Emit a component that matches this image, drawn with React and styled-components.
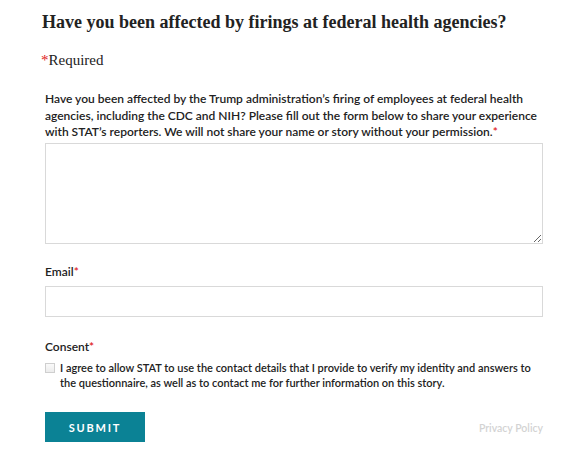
import React from "react";
import styled, { createGlobalStyle } from "styled-components";

const Global = createGlobalStyle`
  html, body { margin: 0; padding: 0; background: #fff; }
  body { font-family: "Lato", "Liberation Sans", sans-serif; color: #222; }
  * { box-sizing: border-box; }
`;

const Page = styled.div`
  width: 586px;
  padding: 10px 43px 0 45px;
`;

const Title = styled.h1`
  margin: 0 0 0 -3px;
  font-family: "Liberation Serif", serif;
  font-weight: 700;
  font-size: 18px;
  line-height: 24px;
  color: #222;
  white-space: nowrap;
`;

const Required = styled.div`
  margin: 17px 0 0 -4px;
  font-family: "Liberation Serif", serif;
  font-size: 15px;
  line-height: 18px;
  color: #222;
`;

const Star = styled.span`
  color: #e02020;
`;

const Form = styled.form`
  display: flex;
  flex-direction: column;
  margin-top: 22px;
`;

const Field = styled.div`
  display: flex;
  flex-direction: column;
  margin-bottom: ${(p) => p.$gap || 0}px;
`;

const Label = styled.label`
  font-size: 12px;
  font-weight: 600;
  line-height: 16.5px;
  color: #222;
  margin-bottom: ${(p) => p.$mb || 4}px;
`;

const TextArea = styled.textarea`
  display: block;
  width: 498px;
  height: 101px;
  border: 1px solid #d9d9d9;
  border-radius: 0;
  resize: vertical;
  font: inherit;
  padding: 6px;
  margin: 0;
  outline: none;
`;

const Input = styled.input`
  display: block;
  width: 498px;
  height: 31px;
  border: 1px solid #d9d9d9;
  border-radius: 0;
  font: inherit;
  padding: 0 6px;
  margin: 0;
  outline: none;
`;

const CheckRow = styled.label`
  display: flex;
  align-items: flex-start;
  gap: 5px;
`;

const Box = styled.span`
  flex: none;
  width: 10px;
  height: 10px;
  margin-top: 3.5px;
  border: 1px solid #cfcfcf;
  background: linear-gradient(#fafafa, #ececec);
`;

const CheckText = styled.span`
  font-size: 11px;
  font-weight: 600;
  line-height: 15px;
  color: #222;
`;

const Footer = styled.div`
  display: flex;
  justify-content: space-between;
  align-items: center;
  margin-top: 22.5px;
`;

const Submit = styled.button`
  width: 100px;
  height: 30px;
  border: 0;
  background: #0b8295;
  color: #fff;
  font-family: "Lato", sans-serif;
  font-weight: 700;
  font-size: 11px;
  letter-spacing: 1.8px;
  padding: 0;
`;

const Privacy = styled.a`
  font-size: 10.5px;
  font-weight: 600;
  color: #d3d3d3;
  text-decoration: none;
  margin-top: 2px;
`;

export default function App() {
  return (
    <Page>
      <Global />
      <Title>Have you been affected by firings at federal health agencies?</Title>
      <Required>
        <Star>*</Star>Required
      </Required>
      <Form onSubmit={(e) => e.preventDefault()}>
        <Field $gap={20}>
          <Label $mb={2}>
            Have you been affected by the Trump administration’s firing of employees at federal health
            agencies, including the CDC and NIH? Please fill out the form below to share your experience
            with STAT’s reporters. We will not share your name or story without your permission.
            <Star>*</Star>
          </Label>
          <TextArea />
        </Field>
        <Field $gap={22}>
          <Label $mb={6}>
            Email<Star>*</Star>
          </Label>
          <Input type="email" />
        </Field>
        <Field>
          <Label $mb={4}>
            Consent<Star>*</Star>
          </Label>
          <CheckRow>
            <Box />
            <CheckText>
              I agree to allow STAT to use the contact details that I provide to verify my identity and answers to
              the questionnaire, as well as to contact me for further information on this story.
            </CheckText>
          </CheckRow>
        </Field>
        <Footer>
          <Submit type="submit">SUBMIT</Submit>
          <Privacy href="#">Privacy Policy</Privacy>
        </Footer>
      </Form>
    </Page>
  );
}
